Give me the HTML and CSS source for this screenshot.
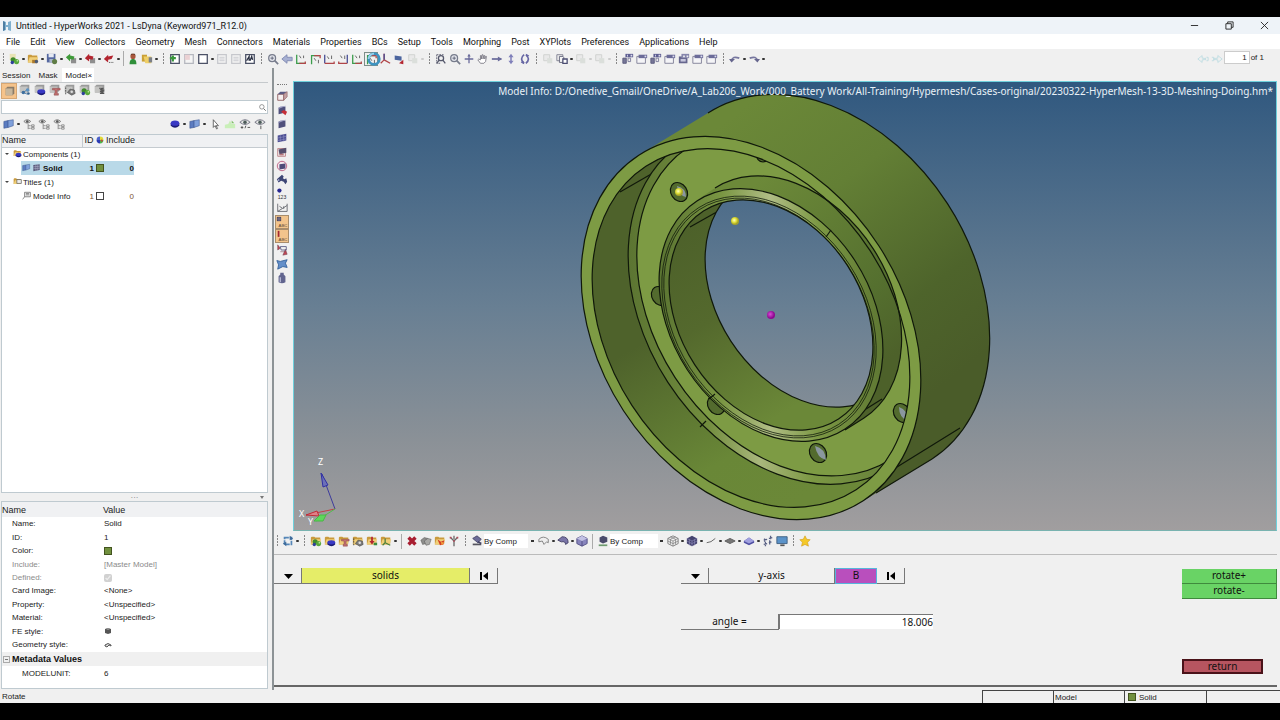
FILE: index.html
```html
<!DOCTYPE html>
<html lang="en">
<head>
    <meta charset="UTF-8">
    <meta name="viewport" content="width=device-width, initial-scale=1.0">
    <title>Untitled - HyperWorks 2021 - LsDyna (Keyword971_R12.0)</title>
    <link rel="stylesheet" href="styles.css">
</head>
<body>
    <!-- icon set -->
    <svg class="sprite" aria-hidden="true">
        <symbol id="folder" viewBox="0 0 14 14"><path d="M1 3l1-1h3l1 1h6v7l-2 1H1z" fill="#c99a3c"/><path d="M3 5h10l-2 6H1z" fill="#f0cf78"/></symbol>
        <symbol id="box" viewBox="0 0 14 14"><path d="M1 3l2-2h9v7l-2 2H1z" fill="#9b9b9b"/><path d="M1 3h9v7H1z" fill="#c4c4c2"/></symbol>
        <symbol id="balls" viewBox="0 0 14 14"><circle cx="6" cy="8" r="3" fill="#3f8a2c"/><circle cx="10" cy="10" r="3" fill="#58a83b"/><circle cx="5" cy="11" r="2" fill="#2e3f9c"/><circle cx="11" cy="9" r="1" fill="#b9e39b"/></symbol>
        <symbol id="new" viewBox="0 0 14 14"><path d="M2 1h7v7H2z" fill="#e8e3b4"/><use href="#balls"/></symbol>
        <symbol id="newbox" viewBox="0 0 14 14"><use href="#box"/><use href="#balls"/></symbol>
        <symbol id="newfolder" viewBox="0 0 14 14"><use href="#folder"/><use href="#balls"/></symbol>
        <symbol id="open" viewBox="0 0 14 14"><use href="#folder"/><path d="M6 8h6v4H6z" fill="#ac7b2f"/><circle cx="11" cy="10" r="2" fill="#4b5a78"/></symbol>
        <symbol id="save" viewBox="0 0 14 14"><path d="M1 1h10v10H1z" fill="#5568a0"/><path d="M3 1h6v4H3z" fill="#e5e9f2"/><path d="M4 7h5v4H4z" fill="#aab5cc"/><circle cx="10" cy="10" r="3" fill="#5f7c45"/></symbol>
        <symbol id="import" viewBox="0 0 14 14"><path d="M7 6h6v6H7z" fill="#8e8e8e"/><path d="M1 5l5-4v2l5 1-1 4-4-1v3z" fill="#3e9a38"/></symbol>
        <symbol id="export" viewBox="0 0 14 14"><path d="M7 6h6v6H7z" fill="#8e8e8e"/><path d="M1 6l5-5v2l5 1-1 4-4-1v3z" fill="#b3242f"/></symbol>
        <symbol id="exportdots" viewBox="0 0 14 14"><path d="M1 7l5-5v2l6-1-2 4-4 1v3z" fill="#b3242f"/><path d="M7 11h1m1 0h1m1 0h1" stroke="#333"/></symbol>
        <symbol id="user" viewBox="0 0 14 14"><path d="M3 13c0-5 2-6 4-6s4 1 4 6z" fill="#2f8f3a"/><circle cx="7" cy="4" r="3" fill="#a8573c"/><path d="M4 3q3-3 6 0l-1-2H5z" fill="#4c2414"/></symbol>
        <symbol id="folders" viewBox="0 0 14 14"><path d="M1 2h6v8H1z" fill="#caa035"/><path d="M3 4h9v8H5z" fill="#efcf67"/><path d="M9 5h4v6H9z" fill="#7b7f86"/></symbol>
        <symbol id="page" viewBox="0 0 14 14"><path d="M2 2h10v10H2z" fill="#fff" stroke="#4b5166" stroke-width="1.5"/></symbol>
        <symbol id="pageadd" viewBox="0 0 14 14"><use href="#page"/><path d="M1 6h7M4.500 3v7" stroke="#39963c" stroke-width="2.500"/></symbol>
        <symbol id="pagedel" viewBox="0 0 14 14" opacity=".35"><use href="#page"/><path d="M2 2h6v6H2z" fill="#e29aa0"/></symbol>
        <symbol id="pagefaint" viewBox="0 0 14 14" opacity=".25"><use href="#page"/><path d="M4 5h6M4 7h6M4 9h6" stroke="#4b5166"/></symbol>
        <symbol id="pageflip" viewBox="0 0 14 14"><use href="#page"/><path d="M3 9l3-5v5M7 9l2-5 1 4" fill="none" stroke="#2b3144" stroke-width="1.500"/></symbol>
        <symbol id="lens" viewBox="0 0 14 14"><circle cx="6" cy="6" r="4" fill="#e3e5ec" stroke="#777c8c" stroke-width="1.500"/><path d="M9 9l4 4" stroke="#777c8c" stroke-width="2"/><path d="M4 6h4M6 4v4" stroke="#555b70"/></symbol>
        <symbol id="lensarea" viewBox="0 0 14 14"><path d="M2 2h9M2 2v10h4" fill="none" stroke="#55586c" stroke-dasharray="2 1"/><circle cx="7" cy="6" r="3" fill="none" stroke="#55586c" stroke-width="1.500"/><path d="M5 8l-3 4M9 8l3 4" stroke="#55586c" stroke-width="1.500"/></symbol>
        <symbol id="back" viewBox="0 0 14 14"><path d="M1 7l6-5v3h6v4H7v3z" fill="#a7b0d2" stroke="#7d87b0"/></symbol>
        <symbol id="axisa" viewBox="0 0 14 14"><path d="M2 2v10h10" fill="none" stroke="#3b9c4b" stroke-width="1.500"/><path d="M5 12h7v-2" fill="none" stroke="#b04548" stroke-width="1.500"/><path d="M5 3l2 3M10 3v3" stroke="#555"/></symbol>
        <symbol id="axisb" viewBox="0 0 14 14"><path d="M3 13V3h9" fill="none" stroke="#3b9c4b" stroke-width="1.500"/><path d="M6 3h7v3" fill="none" stroke="#b04548" stroke-width="1.500"/><path d="M6 6l2 3M11 8v4" stroke="#555"/></symbol>
        <symbol id="axisc" viewBox="0 0 14 14"><path d="M2 2v10" stroke="#464d95" stroke-width="1.500"/><path d="M2 12h11v-2" fill="none" stroke="#b04548" stroke-width="1.500"/><path d="M5 4l2 3M10 3v4" stroke="#555"/></symbol>
        <symbol id="axisd" viewBox="0 0 14 14"><path d="M12 2v10" stroke="#464d95" stroke-width="1.500"/><path d="M2 10v2h10" fill="none" stroke="#b04548" stroke-width="1.500"/><path d="M4 3l2 3M9 3v4" stroke="#555"/></symbol>
        <symbol id="axise" viewBox="0 0 14 14"><path d="M6 1v7l-4 4M6 8l7 4" fill="none" stroke="#b04548" stroke-width="1.500"/><path d="M6 1v7" stroke="#464d95" stroke-width="1.500"/></symbol>
        <symbol id="spin" viewBox="0 0 18 18"><circle cx="9" cy="9" r="6" fill="none" stroke="#3e93c0" stroke-width="3"/><path d="M3 9a6 6 0 0 1 6-6" fill="none" stroke="#9ad2ea" stroke-width="2"/></symbol>
        <symbol id="redo3d" viewBox="0 0 14 14"><path d="M2 3l8 1v5l-8-1z" fill="#4c659e"/><path d="M7 12l5-4v5z" fill="#b3242f"/></symbol>
        <symbol id="faint" viewBox="0 0 14 14" opacity=".35"><path d="M2 2h7v7H2z" fill="#ddd" stroke="#8c928c"/><path d="M6 6h6v6H6z" fill="#b6c1b6"/></symbol>
        <symbol id="pan" viewBox="0 0 14 14"><path d="M7 2v10M2 7h10" stroke="#6a6b9b" stroke-width="1.500"/><path d="M5 4l2-3 2 3z" fill="#6a6b9b"/></symbol>
        <symbol id="hand" viewBox="0 0 14 14"><path d="M4 12L1 8l1-1 2 1V3h1v4l1-5h1v5l1-4h1v4l1-3h1l-1 6-2 2z" fill="#fff" stroke="#777681"/></symbol>
        <symbol id="horiz" viewBox="0 0 14 14"><path d="M1 7h11" stroke="#6a6b9b" stroke-width="2"/><path d="M8 4l5 3-5 3z" fill="#6a6b9b"/></symbol>
        <symbol id="vert" viewBox="0 0 14 14"><path d="M7 3v8" stroke="#8d8dc0" stroke-width="2"/><path d="M4 5l3-4 3 4zM4 9l3 4 3-4z" fill="#8080ba"/></symbol>
        <symbol id="rotate" viewBox="0 0 14 14"><path d="M6 2q-6 5 0 10M8 2q6 5 0 10" fill="none" stroke="#6666a4" stroke-width="2"/><path d="M8 1l4 2-3 2zM6 13l-4-2 3-2z" fill="#6666a4"/></symbol>
        <symbol id="copy" viewBox="0 0 14 14"><path d="M1 2h7v7H1z" fill="#eee" stroke="#77798b"/><path d="M4 4h4l1 1v6H4z" fill="#f4f4f4" stroke="#5a5c74"/><path d="M8 7h5v5H8z" fill="#fff" stroke="#4b4d72" stroke-width="1.500"/></symbol>
        <symbol id="win" viewBox="0 0 14 14"><path d="M1 4h10v8H1z" fill="#f4f4f7" stroke="#797991"/><path d="M3 2h10v4H3z" fill="#6c6c99"/><path d="M10 3h2v2h-2z" fill="#ddddef"/></symbol>
        <symbol id="winsplit" viewBox="0 0 14 14"><path d="M1 6h4v6H1z" fill="#777798" stroke="#555579"/><path d="M7 6h3v4H7z" fill="#eee" stroke="#777798"/><path d="M4 1h9v4H4z" fill="#5f5f92"/><path d="M6 2h1v2H6zM10 2h2v2h-2z" fill="#ddddef"/></symbol>
        <symbol id="wingrid" viewBox="0 0 14 14"><path d="M1 4h10v8H1z" fill="#66668e"/><path d="M3 7h6v3H3z" fill="#c7c7dd"/><path d="M4 1h9v5H4z" fill="#8585ab"/><path d="M6 3h2v2H6zM10 3h2v2h-2z" fill="#eee"/></symbol>
        <symbol id="undo" viewBox="0 0 14 14"><path d="M3 9q1-6 9-3" fill="none" stroke="#77779f" stroke-width="2"/><path d="M0 7l7 0-4 4z" fill="#66668e"/></symbol>
        <symbol id="redo" viewBox="0 0 14 14"><path d="M11 9q-1-6-9-3" fill="none" stroke="#77779f" stroke-width="2"/><path d="M14 7H7l4 4z" fill="#66668e"/></symbol>
        <symbol id="navl" viewBox="0 0 14 14"><path d="M1 7l5-4v3h2v2H6v3zM9 6h1v2H9zM11 5h2v4h-2" fill="none" stroke="#bcdce2"/></symbol>
        <symbol id="navr" viewBox="0 0 14 14"><path d="M13 7L8 3v3H6v2h2v3zM4 6h1v2H4zM1 5h2v4H1" fill="none" stroke="#bcdce2"/></symbol>
        <symbol id="disc" viewBox="0 0 14 14"><path d="M2 6v3q5 5 10 0V6z" fill="#1b1b76"/><ellipse cx="7" cy="6" rx="5" ry="3" fill="#3939c4"/></symbol>
        <symbol id="discbox" viewBox="0 0 14 14"><use href="#box"/><path d="M4 9v2q5 4 9 0V9z" fill="#1b1b76"/><ellipse cx="8.500" cy="8.500" rx="4.500" ry="2.500" fill="#3939c4"/></symbol>
        <symbol id="discfolder" viewBox="0 0 14 14"><use href="#folder"/><path d="M4 9v2q5 4 9 0V9z" fill="#1b1b76"/><ellipse cx="8.500" cy="8.500" rx="4.500" ry="2.500" fill="#3939c4"/></symbol>
        <symbol id="tbeam" viewBox="0 0 14 14"><path d="M4 5h9v2H9.500v4H11v2H6v-2h1V7H4z" fill="#c07070" stroke="#803c3c" stroke-width=".5"/></symbol>
        <symbol id="beambox" viewBox="0 0 14 14"><use href="#box"/><use href="#tbeam"/></symbol>
        <symbol id="beamfolder" viewBox="0 0 14 14"><use href="#folder"/><use href="#tbeam"/></symbol>
        <symbol id="gear" viewBox="0 0 14 14"><path d="M4 10l3-4 5 1 1 4-4 2z" fill="#7b7b7b" stroke="#444" stroke-width=".7"/><circle cx="9" cy="9" r="1.500" fill="#ddd"/><path d="M2 4v8" stroke="#444" stroke-dasharray="2 1"/></symbol>
        <symbol id="gearbox" viewBox="0 0 14 14"><use href="#box"/><use href="#gear"/></symbol>
        <symbol id="gearfolder" viewBox="0 0 14 14"><use href="#folder"/><use href="#gear"/></symbol>
        <symbol id="linkbox" viewBox="0 0 14 14"><use href="#box"/><path d="M5 10l4-3 3 1M5 10l5 2" stroke="#4678a6" fill="none"/><circle cx="5" cy="10" r="2" fill="#3e6f9f"/><circle cx="10" cy="7" r="2" fill="#5d94c4"/><circle cx="11" cy="11" r="1.500" fill="#2f5f8d"/></symbol>
        <symbol id="springbox" viewBox="0 0 14 14"><use href="#box"/><path d="M6 5h5L7 7h5l-5 2h5l-5 2h5" fill="none" stroke="#555" stroke-width="1.200"/></symbol>
        <symbol id="plainbox" viewBox="0 0 14 14"><path d="M2 4l2-2h8v8l-2 2H2z" fill="#8a7b68"/><path d="M2 4h8v8H2z" fill="#c7b69c"/></symbol>
        <symbol id="loadfolder" viewBox="0 0 14 14"><use href="#folder"/><path d="M6 2h2v5h2l-3 4-3-4h2z" fill="#b3242f"/><path d="M9 9h4v3H9z" fill="#3c8a3c"/></symbol>
        <symbol id="axisfolder" viewBox="0 0 14 14"><use href="#folder"/><path d="M6 4v5l-3 3M6 9l6 3" fill="none" stroke="#4b7f3b" stroke-width="1.500"/></symbol>
        <symbol id="blocks" viewBox="0 0 14 14"><path d="M1 4l5-1v8l-5 1z" fill="#5c7cc0" stroke="#354f8a" stroke-width=".6"/><path d="M6 3l6-1v7l-6 2z" fill="#7fa0db" stroke="#354f8a" stroke-width=".6"/></symbol>
        <symbol id="eyelist" viewBox="0 0 14 14"><path d="M1 4q4-4 8 0-4 4-8 0z" fill="#ddd" stroke="#777"/><circle cx="5" cy="4" r="1.500" fill="#555"/><path d="M6 7v6M6 9h3m-3 3h3M10 8h3v2h-3zM10 11h3v2h-3z" fill="none" stroke="#888"/></symbol>
        <symbol id="eyeplus" viewBox="0 0 14 14"><path d="M1 5q6-6 12 0-6 5-12 0z" fill="#e6e8e6" stroke="#667"/><circle cx="7" cy="5" r="2" fill="#4b5a58"/><path d="M2 11h3M3.500 9.500v3M7 12l1-3M10 11h3" stroke="#444"/></symbol>
        <symbol id="eyeone" viewBox="0 0 14 14"><path d="M1 5q6-6 12 0-6 5-12 0z" fill="#e6e8e6" stroke="#667"/><circle cx="7" cy="5" r="2" fill="#4b5a58"/><path d="M8 9v4" stroke="#444"/></symbol>
        <symbol id="cursor" viewBox="0 0 14 14"><path d="M5 2v9l2-2 2 4 1-1-2-3h3z" fill="#fff" stroke="#555"/></symbol>
        <symbol id="green" viewBox="0 0 14 14"><path d="M1 8l4-1 2-4 2 4h4v5H1z" fill="#c9efb8"/><path d="M9 3l3 3H9z" fill="#81c069"/></symbol>
        <symbol id="search" viewBox="0 0 14 14"><circle cx="6" cy="6" r="3.500" fill="none" stroke="#666"/><path d="M9 9l3 3" stroke="#666" stroke-width="1.500"/></symbol>
        <symbol id="wheel" viewBox="0 0 14 14"><path d="M7 7V1a6 6 0 0 1 6 6z" fill="#e2dc39"/><path d="M7 7h6a6 6 0 0 1-6 6z" fill="#4ab84b"/><path d="M7 7v6a6 6 0 0 1-6-6z" fill="#2a3ab4"/><path d="M7 7H1a6 6 0 0 1 6-6z" fill="#4e63c9"/><circle cx="10" cy="8" r="2" fill="#c24a3a"/></symbol>
        <symbol id="meshsm" viewBox="0 0 14 14"><path d="M2 3l10-1v9L2 13z" fill="#59597a"/><path d="M2 6l10-1M2 9l10-1M6 2v10M9 2v10" stroke="#b9b9d2" stroke-width=".8"/></symbol>
        <symbol id="title" viewBox="0 0 14 14"><path d="M4 2h9v7H4z" fill="#eee" stroke="#555"/><path d="M6 4h5M6 6h5M4 9l-3 4" stroke="#555"/></symbol>
        <symbol id="titlefolder" viewBox="0 0 14 14"><use href="#folder"/><path d="M6 4h7v6H6z" fill="#eee" stroke="#555"/></symbol>
        <symbol id="cube" viewBox="0 0 14 14"><path d="M3 4l8-1v7l-8 2z" fill="#50507c"/><path d="M2 6l8-3 2-1-7 1z" fill="#9b9bc0"/></symbol>
        <symbol id="cubewire" viewBox="0 0 14 14"><path d="M2 5h7v7H2z" fill="#f5eded" stroke="#8c5a5c"/><path d="M2 5l3-3h8L9 5z" fill="#5b5b83"/><path d="M9 5l4-3v6l-4 4z" fill="#c4a1a5" stroke="#8c5a5c" stroke-width=".7"/></symbol>
        <symbol id="cubered" viewBox="0 0 14 14"><use href="#cube"/><path d="M6 9l3-2 4 2-2 4z" fill="#c72f38"/></symbol>
        <symbol id="cubemesh" viewBox="0 0 14 14"><path d="M2 4l10-2v8L2 12z" fill="#4d4f93"/><path d="M2 7l10-2M2 10l10-2M5 3v8M9 3v8" stroke="#8f91c2" stroke-width=".7"/></symbol>
        <symbol id="cubeframe" viewBox="0 0 14 14"><path d="M2 3h9v9H2z" fill="none" stroke="#b8777c"/><path d="M3 4l9-2v6l-8 2z" fill="#554f6d"/><path d="M4 10h5" stroke="#b8777c" stroke-width="2"/></symbol>
        <symbol id="cubering" viewBox="0 0 14 14"><circle cx="7" cy="7" r="5.500" fill="#f2e9ee" stroke="#b8577c"/><path d="M4 5l7-1v6l-7 1z" fill="#4d4b78"/></symbol>
        <symbol id="binoc" viewBox="0 0 14 14"><path d="M1 6l6-5 2 2-1 2 2 1 2-1 1 4-2 3-2-3-3-1-3 2z" fill="#3e4675"/><circle cx="3" cy="7" r="1" fill="#b9c0e0"/></symbol>
        <symbol id="measure" viewBox="0 0 14 14"><path d="M2 2v9h11V2M2 11L13 4" fill="none" stroke="#61646b"/><path d="M4 5l3 2M9 5v3" stroke="#61646b"/></symbol>
        <symbol id="swap" viewBox="0 0 14 14"><path d="M2 1v6l3-2zM5 9l6 0M11 6l-3 7 5-1z" fill="#c04552" stroke="#704050" stroke-width=".6"/><path d="M5 3h7v4H6z" fill="none" stroke="#595b83"/></symbol>
        <symbol id="stretch" viewBox="0 0 14 14"><path d="M1 3l4 1 8-2-2 4 2 5-5-1-6 3 1-5z" fill="#648fc9" stroke="#2f5d99"/></symbol>
        <symbol id="bottle" viewBox="0 0 14 14"><path d="M5 1h4v2l2 2v7q-4 2-8 0V5l2-2z" fill="#62658f"/><path d="M5 6v6" stroke="#b8bad4" stroke-width="1.500"/></symbol>
        <symbol id="refresh" viewBox="0 0 14 14"><path d="M3 3h8v8H3z" fill="none" stroke="#5687b8" stroke-width="2" stroke-dasharray="5 1"/><path d="M9 1l4 3-4 2zM5 13l-4-3 4-2z" fill="#3e6b9a"/></symbol>
        <symbol id="delete" viewBox="0 0 14 14"><path d="M3 3l8 8M11 3l-8 8" stroke="#a81e31" stroke-width="4"/></symbol>
        <symbol id="solids" viewBox="0 0 14 14"><path d="M1 6l4-3 4 1-2 6-4 1z" fill="#8e8e8c" stroke="#555" stroke-width=".6"/><path d="M5 7l4-3 4 1-2 6-4 1z" fill="#a9a9a6" stroke="#555" stroke-width=".6"/></symbol>
        <symbol id="organize" viewBox="0 0 14 14"><use href="#folder"/><path d="M4 5l4 3 4-2-1 5-4 1z" fill="#d33d25"/><path d="M8 8l4 1-3 3z" fill="#f0a13d"/></symbol>
        <symbol id="branch" viewBox="0 0 14 14"><path d="M7 13V7L3 3M7 7l4-4M7 5V1" fill="none" stroke="#666" stroke-width="1.500"/><path d="M2 2h2v2H2zM10 2h2v2h-2zM6 6h2v2H6z" fill="#b44b5b"/></symbol>
        <symbol id="paint" viewBox="0 0 14 14"><path d="M2 4l5-3 5 4-4 4z" fill="#6c6c99" stroke="#444466"/><path d="M2 10h10v2H2z" fill="#55555f"/><path d="M8 8l4 2" stroke="#444466" stroke-width="2"/></symbol>
        <symbol id="paintcube" viewBox="0 0 14 14"><path d="M3 3l4-2 5 2v5l-5 2-4-2z" fill="#4a4a6b"/><path d="M2 11h10v2H2z" fill="#6d9a6f"/></symbol>
        <symbol id="surfline" viewBox="0 0 14 14"><path d="M1 5q5-5 11 0v4l-2-1-3 3-2-4-4 1z" fill="#eee" stroke="#777"/></symbol>
        <symbol id="surf" viewBox="0 0 14 14"><path d="M1 6l5-4q7 0 7 7l-3 2q0-4-5-3z" fill="#7a75a8" stroke="#3d3960"/></symbol>
        <symbol id="cube3d" viewBox="0 0 14 14"><path d="M7 1l6 3v6l-6 3-6-3V4z" fill="#8885bd" stroke="#4c4980"/><path d="M1 4l6 3 6-3-6-3z" fill="#c3c2e4"/><path d="M7 7v6" stroke="#4c4980"/></symbol>
        <symbol id="wiremesh" viewBox="0 0 14 14"><path d="M7 1l6 3v6l-6 3-6-3V4z" fill="#f0f0f0" stroke="#777"/><path d="M1 4l6 3 6-3M1 7l6 3 6-3M7 7v6M4 2l6 3v6M10 2L4 5v6" fill="none" stroke="#777" stroke-width=".8"/></symbol>
        <symbol id="cubedark" viewBox="0 0 14 14"><path d="M7 1l6 3v6l-6 3-6-3V4z" fill="#45436f"/><path d="M1 4l6 3 6-3M1 7l6 3 6-3M7 7v6M4 5v7M10 5v7" fill="none" stroke="#8b89b8" stroke-width=".8"/></symbol>
        <symbol id="line" viewBox="0 0 14 14"><path d="M2 9q5 0 10-5" fill="none" stroke="#555"/></symbol>
        <symbol id="plate" viewBox="0 0 14 14"><path d="M1 7l6-3 6 3-6 3z" fill="#777" stroke="#555"/></symbol>
        <symbol id="plateblue" viewBox="0 0 14 14"><path d="M1 7l6-4 6 4v2l-6 3-6-3z" fill="#4f4fa3"/><path d="M1 7l6-4 6 4-6 3z" fill="#a1a1df"/></symbol>
        <symbol id="shrink" viewBox="0 0 14 14"><path d="M2 6l4-1M3 4v4M8 4l4-1M10 1v4M2 11l4-1M4 8v5M8 9l3-1M9 6v5" stroke="#5a6285" stroke-width="1.500"/></symbol>
        <symbol id="monitor" viewBox="0 0 14 14"><path d="M1 2h12v8H1z" fill="#5b93c9" stroke="#3b5a7c"/><path d="M5 12h5" stroke="#555" stroke-width="2"/></symbol>
        <symbol id="star" viewBox="0 0 14 14"><path d="M7 1l2 4 4 .500-3 3 1 4.500-4-2-4 2 1-4.500-3-3L5 5z" fill="#f5c928" stroke="#cf9a1b" stroke-width=".7"/></symbol>
        <symbol id="first" viewBox="0 0 14 14"><path d="M3 3h2v8H3z"/><path d="M11 3v8L6 7z"/></symbol>
        <symbol id="down" viewBox="0 0 14 14"><path d="M3 5h9l-4.500 5z"/></symbol>
    </svg>

    <div class="app">
        <header class="titlebar">
            <svg class="logo" viewBox="0 0 10 10"><path d="M1 0l3 1v3h2V1l3-1v10L6 9V6H4v3l-3 1z" fill="#7fb0cf"/><path d="M1 0l2 1v8l-2 1z" fill="#4d7ea3"/></svg>
            <h1>Untitled - HyperWorks 2021 - LsDyna (Keyword971_R12.0)</h1>
            <div class="window-btns">
                <button aria-label="Minimize"><svg viewBox="0 0 10 10"><path d="M1 5h8"/></svg></button>
                <button aria-label="Restore"><svg viewBox="0 0 10 10"><path d="M1 3h6v6H1zM3 3V1h6v6H7"/></svg></button>
                <button aria-label="Close"><svg viewBox="0 0 10 10"><path d="M1 1l8 8M9 1L1 9"/></svg></button>
            </div>
        </header>

        <nav class="menubar">
            <a href="#">File</a><a href="#">Edit</a><a href="#">View</a><a href="#">Collectors</a><a href="#">Geometry</a><a href="#">Mesh</a><a href="#">Connectors</a><a href="#">Materials</a><a href="#">Properties</a><a href="#">BCs</a><a href="#">Setup</a><a href="#">Tools</a><a href="#">Morphing</a><a href="#">Post</a><a href="#">XYPlots</a><a href="#">Preferences</a><a href="#">Applications</a><a href="#">Help</a>
        </nav>

        <div class="toolbar">
            <span class="grip"></span>
            <button class="tool menu" aria-label="New"><svg><use href="#new"/></svg></button>
            <button class="tool menu" aria-label="Open"><svg><use href="#open"/></svg></button>
            <button class="tool menu" aria-label="Save"><svg><use href="#save"/></svg></button>
            <button class="tool menu" aria-label="Import"><svg><use href="#import"/></svg></button>
            <button class="tool menu" aria-label="Export"><svg><use href="#export"/></svg></button>
            <button class="tool menu" aria-label="Export more"><svg><use href="#exportdots"/></svg></button>
            <span class="sep"></span>
            <button class="tool" aria-label="User profile"><svg><use href="#user"/></svg></button>
            <button class="tool menu" aria-label="Load files"><svg><use href="#folders"/></svg></button>
            <span class="grip"></span>
            <button class="tool" aria-label="Add page"><svg><use href="#pageadd"/></svg></button>
            <button class="tool" aria-label="Delete page" disabled><svg><use href="#pagedel"/></svg></button>
            <button class="tool menu" aria-label="Page layout"><svg><use href="#page"/></svg></button>
            <button class="tool" aria-label="Swap windows" disabled><svg><use href="#pagefaint"/></svg></button>
            <button class="tool" aria-label="Expand window" disabled><svg><use href="#pagefaint"/></svg></button>
            <button class="tool" aria-label="Sync windows"><svg><use href="#pageflip"/></svg></button>
            <span class="grip"></span>
            <button class="tool" aria-label="Fit"><svg><use href="#lens"/></svg></button>
            <button class="tool" aria-label="Previous view"><svg><use href="#back"/></svg></button>
            <button class="tool" aria-label="XY top"><svg><use href="#axisa"/></svg></button>
            <button class="tool" aria-label="XY bottom"><svg><use href="#axisb"/></svg></button>
            <button class="tool" aria-label="XZ left"><svg><use href="#axisc"/></svg></button>
            <button class="tool" aria-label="XZ right"><svg><use href="#axisd"/></svg></button>
            <button class="tool" aria-label="YZ front"><svg><use href="#axisa"/></svg></button>
            <button class="tool busy" aria-label="YZ rear"><svg><use href="#axisb"/></svg><svg class="spinner"><use href="#spin"/></svg></button>
            <button class="tool" aria-label="Isometric"><svg><use href="#axise"/></svg></button>
            <button class="tool" aria-label="Reverse view"><svg><use href="#redo3d"/></svg></button>
            <button class="tool menu" aria-label="Saved views" disabled><svg><use href="#faint"/></svg></button>
            <span class="grip"></span>
            <button class="tool" aria-label="Zoom area"><svg><use href="#lensarea"/></svg></button>
            <button class="tool" aria-label="Zoom"><svg><use href="#lens"/></svg></button>
            <button class="tool" aria-label="Center"><svg><use href="#pan"/></svg></button>
            <button class="tool" aria-label="Pan"><svg><use href="#hand"/></svg></button>
            <button class="tool" aria-label="Rotate left right"><svg><use href="#horiz"/></svg></button>
            <button class="tool" aria-label="Rotate up down"><svg><use href="#vert"/></svg></button>
            <button class="tool" aria-label="Rotate"><svg><use href="#rotate"/></svg></button>
            <span class="grip"></span>
            <button class="tool" aria-label="Cut" disabled><svg><use href="#faint"/></svg></button>
            <button class="tool menu" aria-label="Copy"><svg><use href="#copy"/></svg></button>
            <button class="tool menu" aria-label="Paste" disabled><svg><use href="#faint"/></svg></button>
            <button class="tool menu" aria-label="Overlay" disabled><svg><use href="#faint"/></svg></button>
            <span class="grip"></span>
            <button class="tool" aria-label="Capture window"><svg><use href="#winsplit"/></svg></button>
            <button class="tool" aria-label="Capture panel"><svg><use href="#win"/></svg></button>
            <button class="tool" aria-label="Capture graphics"><svg><use href="#winsplit"/></svg></button>
            <button class="tool" aria-label="Capture area"><svg><use href="#win"/></svg></button>
            <button class="tool" aria-label="Capture page"><svg><use href="#wingrid"/></svg></button>
            <button class="tool" aria-label="Capture video"><svg><use href="#win"/></svg></button>
            <button class="tool" aria-label="Capture dynamic"><svg><use href="#win"/></svg></button>
            <span class="grip"></span>
            <button class="tool menu" aria-label="Undo"><svg><use href="#undo"/></svg></button>
            <button class="tool menu" aria-label="Redo"><svg><use href="#redo"/></svg></button>
            <div class="pager">
                <button class="tool" aria-label="Previous page" disabled><svg><use href="#navl"/></svg></button>
                <button class="tool" aria-label="Next page" disabled><svg><use href="#navr"/></svg></button>
                <input id="page-no" type="text" value="1">
                <label for="page-no">of 1</label>
            </div>
        </div>

        <div class="workspace">
            <aside class="browser">
                <div class="tabs">
                    <button>Session</button><button>Mask</button><button class="active">Model<span>×</span></button>
                </div>
                <div class="views">
                    <button class="tool on" aria-label="Model view"><svg><use href="#plainbox"/></svg></button>
                    <button class="tool" aria-label="Assembly view"><svg><use href="#linkbox"/></svg></button>
                    <button class="tool" aria-label="Component view"><svg><use href="#discbox"/></svg></button>
                    <button class="tool" aria-label="Property view"><svg><use href="#beambox"/></svg></button>
                    <button class="tool" aria-label="Material view"><svg><use href="#gearbox"/></svg></button>
                    <button class="tool" aria-label="Include view"><svg><use href="#newbox"/></svg></button>
                    <button class="tool" aria-label="Load view"><svg><use href="#springbox"/></svg></button>
                </div>
                <div class="search">
                    <input type="text" aria-label="Search model">
                    <svg><use href="#search"/></svg>
                </div>
                <div class="filters">
                    <button class="tool menu" aria-label="Element display"><svg><use href="#blocks"/></svg></button>
                    <button class="tool" aria-label="Show all"><svg><use href="#eyelist"/></svg></button>
                    <button class="tool" aria-label="Hide all"><svg><use href="#eyelist"/></svg></button>
                    <button class="tool" aria-label="Reverse all"><svg><use href="#eyelist"/></svg></button>
                    <span class="push"></span>
                    <button class="tool menu" aria-label="Entity type"><svg><use href="#disc"/></svg></button>
                    <button class="tool menu" aria-label="Display type"><svg><use href="#blocks"/></svg></button>
                    <button class="tool" aria-label="Select"><svg><use href="#cursor"/></svg></button>
                    <button class="tool" aria-label="Find"><svg><use href="#green"/></svg></button>
                    <button class="tool" aria-label="Show or hide"><svg><use href="#eyeplus"/></svg></button>
                    <button class="tool" aria-label="Isolate"><svg><use href="#eyeone"/></svg></button>
                </div>
                <div class="tree">
                    <table>
                        <thead>
                            <tr><th class="c-name">Name</th><th class="c-id">ID</th><th class="c-color"><svg><use href="#wheel"/></svg></th><th class="c-inc">Include</th><th></th></tr>
                        </thead>
                        <tbody>
                            <tr><td colspan="5"><span class="arrow"></span><svg><use href="#discfolder"/></svg>Components (1)</td></tr>
                            <tr class="selected"><td class="leaf"><svg><use href="#blocks"/></svg><svg><use href="#meshsm"/></svg><b>Solid</b></td><td class="num">1</td><td><i class="swatch green"></i></td><td class="num">0</td><td></td></tr>
                            <tr><td colspan="5"><span class="arrow"></span><svg><use href="#titlefolder"/></svg>Titles (1)</td></tr>
                            <tr class="info"><td class="leaf"><svg><use href="#title"/></svg>Model Info</td><td class="num">1</td><td><i class="swatch"></i></td><td class="num">0</td><td></td></tr>
                        </tbody>
                    </table>
                </div>
                <div class="splitter"><span>···</span><i></i></div>
                <div class="props">
                    <table>
                        <thead>
                            <tr><th>Name</th><th>Value</th></tr>
                        </thead>
                        <tbody>
                            <tr><td>Name:</td><td>Solid</td></tr>
                            <tr><td>ID:</td><td>1</td></tr>
                            <tr><td>Color:</td><td><i class="swatch green"></i></td></tr>
                            <tr class="off"><td>Include:</td><td>[Master Model]</td></tr>
                            <tr class="off"><td><label for="defined">Defined:</label></td><td><input id="defined" type="checkbox" checked disabled></td></tr>
                            <tr><td>Card Image:</td><td>&lt;None&gt;</td></tr>
                            <tr><td>Property:</td><td>&lt;Unspecified&gt;</td></tr>
                            <tr><td>Material:</td><td>&lt;Unspecified&gt;</td></tr>
                            <tr><td>FE style:</td><td><svg viewBox="0 0 8 8"><path d="M1 2l3-1 3 1v4L4 7 1 6z" fill="#555"/><path d="M2 2l2-1 2 1-2 1z" fill="#999"/></svg></td></tr>
                            <tr><td>Geometry style:</td><td><svg viewBox="0 0 8 8"><path d="M1 4q3-3 6 0v1L5 4 3 6 1 5z" fill="#ddd" stroke="#555"/></svg></td></tr>
                            <tr class="group"><td colspan="2"><i class="minus"></i>Metadata Values</td></tr>
                            <tr class="sub"><td>MODELUNIT:</td><td>6</td></tr>
                        </tbody>
                    </table>
                </div>
            </aside>

            <main class="stage">
                <div class="canvas-row">
                    <div class="side-tools">
                        <span class="grip-h"></span>
                        <button class="tool" aria-label="Wireframe"><svg><use href="#cubewire"/></svg></button>
                        <button class="tool" aria-label="Mask"><svg><use href="#cubered"/></svg></button>
                        <button class="tool" aria-label="Shaded"><svg><use href="#cube"/></svg></button>
                        <button class="tool" aria-label="Mesh lines"><svg><use href="#cubemesh"/></svg></button>
                        <button class="tool" aria-label="Box trim"><svg><use href="#cubeframe"/></svg></button>
                        <button class="tool" aria-label="Spherical clip"><svg><use href="#cubering"/></svg></button>
                        <button class="tool" aria-label="Find"><svg><use href="#binoc"/></svg></button>
                        <button class="tool" aria-label="Numbers"><svg viewBox="0 0 14 14"><circle cx="4" cy="3" r="2.500" fill="#27278f"/><text x="2" y="13" font-size="6" fill="#333">123</text></svg></button>
                        <button class="tool" aria-label="Measure"><svg><use href="#measure"/></svg></button>
                        <button class="tool lit" aria-label="Component labels"><svg viewBox="0 0 14 14"><path d="M1 1h5v5H1z" fill="#4f4760"/><path d="M1 3.500h5M3.500 1v5" stroke="#a7a0bb" stroke-width=".5"/><text x="3" y="13" font-size="5" fill="#574333">ABC</text></svg></button>
                        <button class="tool lit" aria-label="Load labels"><svg viewBox="0 0 14 14"><path d="M3 1v7" stroke="#a32631" stroke-width="2"/><text x="3" y="13" font-size="5" fill="#574333">ABC</text></svg></button>
                        <button class="tool" aria-label="Handles"><svg><use href="#swap"/></svg></button>
                        <button class="tool" aria-label="Morph"><svg><use href="#stretch"/></svg></button>
                        <button class="tool" aria-label="Mass"><svg><use href="#bottle"/></svg></button>
                    </div>
                    <div class="viewport">
                        <svg class="model" viewBox="294 82 982 448" preserveAspectRatio="xMidYMid slice">
                            <defs>
                                <linearGradient id="sky" gradientUnits="userSpaceOnUse" x1="0" y1="83" x2="0" y2="531"><stop offset="0" stop-color="#30587f"/><stop offset=".5" stop-color="#687f93"/><stop offset=".8" stop-color="#8b9197"/><stop offset="1" stop-color="#a19e9f"/></linearGradient>
                                <linearGradient id="shell" gradientUnits="userSpaceOnUse" x1="740" y1="110" x2="950" y2="380"><stop offset="0" stop-color="#6b8838"/><stop offset=".35" stop-color="#637f35"/><stop offset=".75" stop-color="#4e642b"/><stop offset="1" stop-color="#4a5c29"/></linearGradient>
                                <linearGradient id="wall" gradientUnits="userSpaceOnUse" x1="610" y1="200" x2="780" y2="510"><stop offset="0" stop-color="#4e622b"/><stop offset=".4" stop-color="#4e622b"/><stop offset=".8" stop-color="#698737"/><stop offset="1" stop-color="#6b8838"/></linearGradient>
                                <linearGradient id="bore" gradientUnits="userSpaceOnUse" x1="680" y1="230" x2="800" y2="430"><stop offset="0" stop-color="#4d612a"/><stop offset=".4" stop-color="#54692d"/><stop offset=".9" stop-color="#6b8838"/></linearGradient>
                                <linearGradient id="hub" gradientUnits="userSpaceOnUse" x1="760" y1="180" x2="900" y2="350"><stop offset="0" stop-color="#6c8939"/><stop offset=".7" stop-color="#55702f"/><stop offset="1" stop-color="#4d612a"/></linearGradient>
                                <linearGradient id="shine" gradientUnits="userSpaceOnUse" x1="650" y1="315" x2="890" y2="315" gradientTransform="rotate(-57 771 315)"><stop offset="0" stop-color="#566f2f"/><stop offset=".3" stop-color="#7a9643"/><stop offset=".5" stop-color="#b0bd85"/><stop offset=".7" stop-color="#7c9844"/><stop offset="1" stop-color="#5b7431"/></linearGradient>
                                <linearGradient id="groove" gradientUnits="userSpaceOnUse" x1="630" y1="305" x2="890" y2="305" gradientTransform="rotate(-57 787 305)"><stop offset="0" stop-color="#5c7532"/><stop offset=".3" stop-color="#728d3e"/><stop offset=".5" stop-color="#a9b77c"/><stop offset=".7" stop-color="#7c9844"/><stop offset="1" stop-color="#66813a"/></linearGradient>
                                <clipPath id="cavity"><ellipse cx="751" cy="328" rx="193" ry="142" transform="rotate(57 751 328)"/></clipPath>
                                <clipPath id="through"><ellipse cx="771" cy="315" rx="124" ry="91" transform="rotate(57 771 315)"/></clipPath>
                                <clipPath id="rear"><ellipse cx="808" cy="291" rx="125" ry="92" transform="rotate(57 808 291)"/></clipPath>
                                <radialGradient id="yellow" cx=".4" cy=".4"><stop offset="0" stop-color="#ffffc0"/><stop offset=".6" stop-color="#dede35"/><stop offset="1" stop-color="#a5a22a"/></radialGradient>
                                <radialGradient id="purple" cx=".4" cy=".4"><stop offset="0" stop-color="#d84bd8"/><stop offset="1" stop-color="#8d0a8f"/></radialGradient>
                            </defs>
                            <rect x="-1000" y="-1000" width="4000" height="4000" fill="url(#sky)"/>
                            <!-- outer shell -->
                            <path d="M639 155L708 113A205 151 57 0 1 932 459L863 501z" fill="url(#shell)"/>
                            <path d="M708 113A205 151 57 0 1 932 459" class="edge"/>
                            <path d="M932 459L876 493M897 467L960 428" class="edge"/>
                            <ellipse cx="751" cy="328" rx="206" ry="152" transform="rotate(57 751 328)" class="edge face"/>
                            <!-- cavity -->
                            <g clip-path="url(#cavity)">
                                <rect x="560" y="120" width="380" height="400" fill="url(#wall)"/>
                                <path d="M620 192L660 169" class="edge"/>
                                <ellipse cx="787" cy="305" rx="193" ry="142" transform="rotate(57 787 305)" class="edge groove"/>
                                <ellipse cx="790" cy="303" rx="186" ry="137" transform="rotate(57 790 303)" class="edge face"/>
                                <path d="M706 421L700 427" class="edge"/>
                                <g class="edge hole">
                                    <ellipse cx="763" cy="154" rx="7" ry="8"/>
                                    <ellipse cx="679" cy="192" rx="10" ry="8" transform="rotate(57 679 192)"/>
                                    <ellipse cx="660" cy="296" rx="10" ry="8" transform="rotate(57 660 296)"/>
                                    <ellipse cx="716" cy="405" rx="10" ry="8" transform="rotate(57 716 405)"/>
                                    <ellipse cx="818" cy="453" rx="10" ry="8" transform="rotate(57 818 453)"/>
                                    <ellipse cx="902" cy="413" rx="10" ry="8" transform="rotate(57 902 413)"/>
                                </g>
                                <path d="M815 446q10 2 11 14-9-2-11-14zM899 407q9 3 9 14-9-3-9-14zM677 186q9 2 9 11-8-2-9-11z" fill="#8a979f"/>
                            </g>
                            <!-- hub -->
                            <path d="M697 200L715 188A136 99 57 0 1 864 418L845 430z" fill="url(#hub)"/>
                            <path d="M715 188A136 99 57 0 1 864 418L845 430M866 409L882 399" class="edge"/>
                            <ellipse cx="771" cy="315" rx="136" ry="100" transform="rotate(57 771 315)" class="edge shine"/>
                            <ellipse cx="769" cy="317" rx="130" ry="96" transform="rotate(57 769 317)" class="edge thin"/>
                            <ellipse cx="769" cy="317" rx="128" ry="94" transform="rotate(57 769 317)" class="edge thin"/>
                            <g clip-path="url(#through)">
                                <rect x="650" y="190" width="240" height="250" fill="url(#bore)"/>
                                <path d="M690 227L722 209" class="edge"/>
                                <rect x="650" y="170" width="280" height="250" fill="url(#sky)" clip-path="url(#rear)"/>
                                <ellipse cx="808" cy="291" rx="125" ry="92" transform="rotate(57 808 291)" class="edge"/>
                            </g>
                            <ellipse cx="771" cy="315" rx="124" ry="91" transform="rotate(57 771 315)" class="edge"/>
                            <path d="M715 394L709 399M831 230L826 237" class="edge"/>
                            <ellipse cx="751" cy="328" rx="193" ry="142" transform="rotate(57 751 328)" class="edge"/>
                            <!-- rotation points -->
                            <circle cx="679" cy="192" r="4" fill="url(#yellow)"/>
                            <circle cx="735" cy="221" r="4" fill="url(#yellow)"/>
                            <circle cx="771" cy="315" r="4" fill="url(#purple)"/>
                            <!-- axes -->
                            <path d="M335 509L322 474" stroke="#3d3b9c"/>
                            <path d="M321 473l2 14 5-2z" fill="#6c70b8" stroke="#3030a4"/>
                            <path d="M335 509L306 515" stroke="#c43c46"/>
                            <path d="M306 515l11-4 2 5z" fill="#e08088" stroke="#c02c38"/>
                            <path d="M335 509L316 521" stroke="#4fbd4b"/>
                            <path d="M314 521l6-6h6l-3 6z" fill="#5fd65b" stroke="#48b844"/>
                            <g class="axis-label"><text x="318" y="465">Z</text><text x="299" y="517">X</text><text x="308" y="525">Y</text></g>
                        </svg>
                        <p class="model-info">Model Info: D:/Onedive_Gmail/OneDrive/A_Lab206_Work/000_Battery Work/All-Training/Hypermesh/Cases-original/20230322-HyperMesh-13-3D-Meshing-Doing.hm*</p>
                    </div>
                </div>

                <div class="toolbar lower">
                    <span class="grip"></span>
                    <button class="tool menu" aria-label="Refresh"><svg><use href="#refresh"/></svg></button>
                    <span class="grip"></span>
                    <button class="tool" aria-label="Assemblies"><svg><use href="#newfolder"/></svg></button>
                    <button class="tool" aria-label="Components"><svg><use href="#discfolder"/></svg></button>
                    <button class="tool" aria-label="Properties"><svg><use href="#beamfolder"/></svg></button>
                    <button class="tool" aria-label="Materials"><svg><use href="#gearfolder"/></svg></button>
                    <button class="tool" aria-label="Load collectors"><svg><use href="#loadfolder"/></svg></button>
                    <button class="tool menu" aria-label="System collectors"><svg><use href="#axisfolder"/></svg></button>
                    <span class="sep"></span>
                    <button class="tool" aria-label="Delete"><svg><use href="#delete"/></svg></button>
                    <button class="tool" aria-label="Card edit"><svg><use href="#solids"/></svg></button>
                    <button class="tool" aria-label="Organize"><svg><use href="#organize"/></svg></button>
                    <button class="tool" aria-label="Renumber"><svg><use href="#branch"/></svg></button>
                    <span class="grip"></span>
                    <svg class="lead"><use href="#paint"/></svg>
                    <select class="color-mode" aria-label="Geometry color mode"><option>By Comp</option></select>
                    <button class="tool menu" aria-label="Wireframe geometry"><svg><use href="#surfline"/></svg></button>
                    <button class="tool menu" aria-label="Shaded geometry"><svg><use href="#surf"/></svg></button>
                    <button class="tool" aria-label="Transparency"><svg><use href="#cube3d"/></svg></button>
                    <span class="sep"></span>
                    <svg class="lead"><use href="#paintcube"/></svg>
                    <select class="color-mode wide" aria-label="Element color mode"><option>By Comp</option></select>
                    <button class="tool menu" aria-label="Wireframe elements"><svg><use href="#wiremesh"/></svg></button>
                    <button class="tool menu" aria-label="Shaded elements"><svg><use href="#cubedark"/></svg></button>
                    <button class="tool menu" aria-label="1D display"><svg><use href="#line"/></svg></button>
                    <button class="tool menu" aria-label="2D display"><svg><use href="#plate"/></svg></button>
                    <button class="tool menu" aria-label="Layers"><svg><use href="#plateblue"/></svg></button>
                    <button class="tool" aria-label="Shrink"><svg><use href="#shrink"/></svg></button>
                    <button class="tool" aria-label="Visualization"><svg><use href="#monitor"/></svg></button>
                    <span class="grip"></span>
                    <button class="tool" aria-label="Favorites"><svg><use href="#star"/></svg></button>
                </div>

                <section class="panel">
                    <div class="field">
                        <button class="cell small" aria-label="Entity type"><svg><use href="#down"/></svg></button>
                        <button class="cell entity">solids</button>
                        <button class="cell small" aria-label="Reset selection"><svg><use href="#first"/></svg></button>
                    </div>
                    <div class="fields">
                        <div class="field">
                            <button class="cell small" aria-label="Axis type"><svg><use href="#down"/></svg></button>
                            <button class="cell axis">y-axis</button>
                            <button class="cell base">B</button>
                            <button class="cell small" aria-label="Reset axis"><svg><use href="#first"/></svg></button>
                        </div>
                        <div class="field">
                            <label class="cell angle" for="angle">angle =</label>
                            <input id="angle" class="angle-value" type="text" value="18.006">
                        </div>
                    </div>
                    <div class="actions">
                        <button class="go">rotate+</button>
                        <button class="go">rotate-</button>
                        <button class="return">return</button>
                    </div>
                </section>
            </main>
        </div>

        <footer class="statusbar">
            <span class="message">Rotate</span>
            <span class="slot"></span>
            <span class="slot">Model</span>
            <span class="slot comp"><i class="swatch green"></i>Solid</span>
            <span class="slot"></span>
        </footer>
    </div>
</body>
</html>
```

FILE: styles.css
```css
* {
    margin: 0;
    padding: 0;
    box-sizing: border-box;
}

body {
    font-family: "Liberation Sans", Arial, sans-serif;
    font-size: 8px;
    color: #222;
    background: #000;
    height: 100vh;
    padding: 17px 0;
}

button,
input,
select {
    font: inherit;
    color: inherit;
    border: none;
    border-radius: 0;
    background: none;
}

button svg,
td svg,
th svg {
    display: block;
}

.sprite {
    position: absolute;
    width: 0;
    height: 0;
}

.app {
    display: flex;
    flex-direction: column;
    height: 100%;
    background: #f0f0f0;
}

/* title and menu */
.titlebar {
    display: flex;
    align-items: center;
    height: 17px;
    padding-left: 2px;
    background: #eef3f8;
    font-family: Roboto, sans-serif;
}

.logo {
    width: 10px;
    height: 10px;
    margin-right: 4px;
}

.titlebar h1 {
    flex: 1;
    font-size: 9px;
    font-weight: normal;
    color: #111;
}

.window-btns {
    display: flex;
}

.window-btns button {
    width: 35px;
    height: 17px;
    padding-left: 4px;
    display: flex;
    align-items: center;
    justify-content: center;
}

.window-btns svg {
    width: 9px;
    height: 9px;
    fill: none;
    stroke: #222;
}

.menubar {
    display: flex;
    align-items: center;
    gap: 10px;
    height: 15px;
    padding-left: 6px;
    background: #fff;
    font-family: Roboto, sans-serif;
    font-size: 9px;
    white-space: nowrap;
}

.menubar a {
    color: #111;
    text-decoration: none;
}

/* toolbars */
.toolbar {
    display: flex;
    align-items: center;
    height: 19px;
}

.tool {
    display: flex;
    align-items: center;
    width: 14px;
    height: 14px;
    flex-shrink: 0;
}

.tool svg,
.lead {
    width: 12px;
    height: 12px;
    margin: 0 1px;
    flex-shrink: 0;
}

.tool.menu {
    width: 19px;
}

.tool.menu::after {
    content: "";
    width: 3px;
    height: 2px;
    margin-left: 1px;
    background: #333;
    border-radius: 1px;
}

.tool.menu:disabled::after {
    background: #ccc;
}

.busy {
    position: relative;
    outline: 1px solid #7d8d88;
    outline-offset: -1px;
}

.busy .spinner {
    position: absolute;
    left: 2px;
    top: -1px;
    width: 16px;
    height: 16px;
    margin: 0;
}

.grip {
    width: 9px;
    height: 12px;
    background: linear-gradient(#888, #888) center / 1px 100% no-repeat;
    -webkit-mask: repeating-linear-gradient(#000 0 2px, transparent 2px 3px);
    mask: repeating-linear-gradient(#000 0 2px, transparent 2px 3px);
    flex-shrink: 0;
}

.toolbar .grip:first-child {
    width: 7px;
}

.sep {
    width: 1px;
    height: 15px;
    margin: 0 2px;
    background: #aaa;
}

.pager {
    display: flex;
    align-items: center;
    margin-left: auto;
    margin-right: 16px;
}

.pager input {
    width: 26px;
    height: 13px;
    margin-top: -3px;
    padding-right: 2px;
    background: #fff;
    border: 1px solid #ccc;
    text-align: right;
}

.pager label {
    margin-left: 1px;
    margin-top: -3px;
}

.workspace {
    display: flex;
    flex: 1;
    min-height: 0;
}

/* model browser */
.browser {
    display: flex;
    flex-direction: column;
    width: 274px;
    padding: 0 4px 0 1px;
    border-right: 2px solid #8d9396;
}

.tabs {
    display: flex;
    height: 14px;
}

.tabs button {
    padding: 0 4px;
    white-space: nowrap;
}

.tabs button:first-child {
    padding-left: 1px;
}

.tabs .active {
    padding: 0 2px 0 4px;
    background: #fff;
}

.views {
    display: flex;
    gap: 1px;
    height: 18px;
    border-top: 1px solid #c5c9cc;
}

.views .on {
    width: 16px;
    height: 16px;
    padding-left: 1px;
    background: #f5c38b;
    border: 1px solid #d6a774;
}

.search {
    display: flex;
    align-items: center;
    height: 14px;
    background: #fff;
    border: 1px solid #bfcad0;
}

.search input {
    flex: 1;
    min-width: 0;
}

.search svg {
    width: 9px;
    height: 9px;
}

.filters {
    display: flex;
    align-items: center;
    gap: 1px;
    height: 20px;
    padding: 0 1px;
}

.push {
    flex: 1;
}

.tree {
    flex: 1;
    background: #fff;
    border: 1px solid #bfcad0;
    overflow: hidden;
}

table {
    width: 100%;
    border-collapse: collapse;
    table-layout: fixed;
    white-space: nowrap;
}

th {
    font-size: 9px;
    font-weight: normal;
    text-align: left;
    background: #f0f1f3;
}

.tree th,
.tree td {
    height: 14px;
    line-height: 13px;
}

.tree thead th {
    height: 12px;
    line-height: 11px;
    border-bottom: 1px solid #c5cbd0;
}

.c-name {
    width: 80px;
}

.c-id {
    width: 12px;
    padding-left: 2px;
    border-left: 1px solid #c5cbd0;
}

.c-color {
    width: 12px;
}

.c-inc {
    width: 28px;
}

.tree svg {
    display: inline-block;
    width: 9px;
    height: 9px;
    margin-right: 1px;
    vertical-align: -1px;
}

.tree .c-color svg {
    width: 8px;
    height: 8px;
    margin: 0 2px;
}

.arrow {
    display: inline-block;
    margin: 0 4px 2px 3px;
    border: 2px solid transparent;
    border-top-color: #444;
    border-bottom: none;
}

.tree .leaf {
    padding-left: 20px;
}

.leaf svg:last-of-type {
    margin-right: 2px;
}

.num {
    text-align: right;
}

.selected td {
    background: #b9d9e8;
    color: #111;
    font-weight: bold;
}

.selected td:first-child {
    background: linear-gradient(90deg, #fff 19px, #b9d9e8 19px);
}

.selected td:last-child {
    background: #fff;
}

.info .num {
    color: #7c5230;
}

.swatch {
    display: inline-block;
    width: 8px;
    height: 8px;
    margin-left: 2px;
    background: #fff;
    border: 1px solid #444;
    vertical-align: -1px;
}

.swatch.green {
    background: #71903e;
    border-color: #43541f;
}

.splitter {
    display: flex;
    align-items: center;
    justify-content: center;
    position: relative;
    height: 8px;
    color: #777;
}

.splitter i {
    position: absolute;
    right: 4px;
    border: 2px solid transparent;
    border-top: 3px solid #777;
    border-bottom: none;
}

.props {
    height: 188px;
    margin-bottom: 1px;
    background: #fff;
    border: 1px solid #bfcad0;
}

.props table {
    height: 178px;
}

.props th {
    height: 15px;
}

.props th:first-child {
    width: 101px;
}

.props td:first-child {
    padding-left: 10px;
}

.props td:nth-child(2) {
    padding-left: 1px;
}

.props td svg {
    width: 8px;
    height: 8px;
}

.props .swatch {
    display: block;
    margin: 0;
}

.props input {
    display: block;
    width: 8px;
    height: 8px;
}

.props .off {
    color: #8b8b8b;
}

.props .group td {
    padding-left: 1px;
    background: #f0f0f0;
    font-size: 9px;
    font-weight: bold;
    color: #111;
}

.props .sub td:first-child {
    padding-left: 20px;
}

.minus {
    display: inline-block;
    width: 7px;
    height: 7px;
    margin-right: 2px;
    border: 1px solid #aaa;
    background: linear-gradient(#777, #777) center / 3px 1px no-repeat;
    vertical-align: -1px;
}

/* graphics area */
.stage {
    display: flex;
    flex-direction: column;
    flex: 1;
    min-width: 0;
    padding: 13px 3px 3px 0;
}

.canvas-row {
    display: flex;
    flex: 1;
    min-height: 0;
}

.side-tools {
    display: flex;
    flex-direction: column;
    align-items: center;
    width: 19px;
    padding-right: 4px;
}

.side-tools .lit {
    background: #f2c48c;
    outline: 1px solid #a88d6c;
    outline-offset: -1px;
}

.grip-h {
    width: 10px;
    height: 9px;
    border-top: 1px dotted #777;
    margin-top: 3px;
    margin-bottom: -4px;
}

.viewport {
    flex: 1;
    position: relative;
    min-width: 0;
    border: 1px solid #6fd0dc;
    border-bottom-color: #79b3b0;
    overflow: hidden;
}

.model {
    display: block;
    width: 100%;
    height: 100%;
}

.model .edge {
    fill: none;
    stroke: #10180a;
    stroke-width: 1.2;
}

.model .thin {
    stroke-width: 0.7;
}

.model .face {
    fill: #7d9b44;
}

.model .hole {
    fill: #536b2e;
}

.model .shine {
    fill: url(#shine);
}

.model .groove {
    fill: url(#groove);
}

.axis-label {
    fill: #fff;
    font-family: "Noto Sans", sans-serif;
    font-size: 9px;
}

.model-info {
    position: absolute;
    top: 2px;
    right: 3px;
    font-family: "Noto Sans", sans-serif;
    font-size: 10px;
    line-height: 14px;
    color: #e9f1f7;
    white-space: nowrap;
}

.lower {
    height: 24px;
    padding-bottom: 3px;
    border-bottom: 1px solid #bbb;
}

.lower .sep {
    margin: 0 3px;
}

.color-mode {
    width: 51px;
    height: 14px;
    margin-right: 2px;
    background: linear-gradient(#333, #333) right 1px top 6px / 3px 2px no-repeat,
        linear-gradient(#fff, #fff) left / 44px 100% no-repeat;
    appearance: none;
}

.color-mode.wide {
    width: 54px;
    background-size: 3px 2px, 48px 100%;
}

/* rotate panel */
.panel {
    display: grid;
    grid-template-columns: 407fr 501fr 95fr;
    height: 132px;
    padding-top: 13px;
    border-bottom: 2px solid #666;
    font-family: "Noto Sans", sans-serif;
    font-size: 10px;
    color: #111;
}

.field {
    display: flex;
    height: 16px;
}

.fields {
    display: flex;
    flex-direction: column;
    gap: 30px;
}

.cell {
    display: flex;
    align-items: center;
    justify-content: center;
    height: 16px;
    line-height: 12px;
    padding-bottom: 2px;
    border-right: 1px solid #777;
    border-bottom: 1px solid #777;
}

.small {
    width: 28px;
    padding-bottom: 0;
}

.small svg {
    width: 14px;
    height: 14px;
}

.entity {
    width: 168px;
    background: #e5ed68;
}

.axis {
    width: 126px;
}

.base {
    width: 42px;
    background: #b94fbd;
    border: 1px solid #56b5dc;
}

.angle {
    width: 98px;
}

.angle-value {
    width: 154px;
    height: 15px;
    background: #fff;
    border-top: 1px solid #777;
    border-left: 1px solid #777;
    text-align: right;
}

.actions {
    display: flex;
    flex-direction: column;
    padding-top: 1px;
}

.go,
.return {
    height: 15px;
    line-height: 12px;
    padding-bottom: 2px;
}

.go {
    background: #69d365;
    border-right: 1px solid #3f8a3d;
    border-bottom: 1px solid #3f8a3d;
}

.return {
    width: 81px;
    margin-top: 60px;
    background: #b75560;
    border: 2px solid #4a1219;
    line-height: 10px;
}

.statusbar {
    display: flex;
    height: 13px;
    line-height: 13px;
}

.message {
    flex: 1;
    padding-left: 2px;
}

.slot {
    width: 71px;
    padding-left: 1px;
    border-top: 1px solid #444;
    border-left: 1px solid #444;
}

.slot.comp {
    width: 82px;
}

.slot:last-child {
    width: 74px;
}

.slot .swatch {
    margin-right: 3px;
}
```
